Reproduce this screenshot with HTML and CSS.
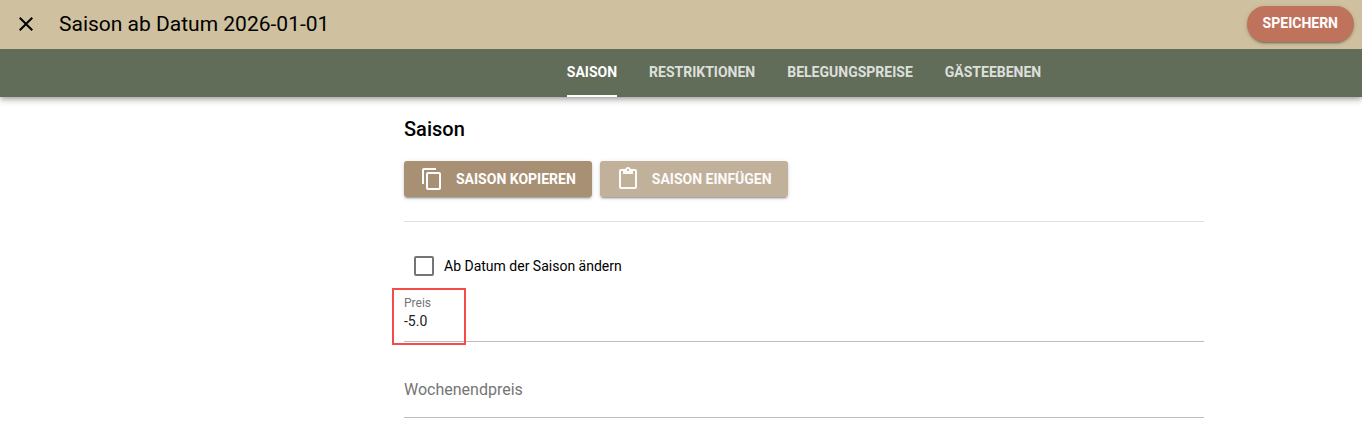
FILE: index.html
```html
<!DOCTYPE html>
<html lang="de">
<head>
  <meta charset="UTF-8">
  <meta name="viewport" content="width=device-width, initial-scale=1.0">
  <title>Saison ab Datum 2026-01-01</title>
  <link rel="stylesheet" href="styles.css">
</head>
<body>
  <header class="header">
    <div class="toolbar">
      <button type="button" class="close-button" aria-label="Schließen">
        <svg width="24" height="24" viewBox="0 0 24 24"><path d="M19 6.41L17.59 5 12 10.59 6.41 5 5 6.41 10.59 12 5 17.59 6.41 19 12 13.41 17.59 19 19 17.59 13.41 12z"/></svg>
      </button>
      <h1>Saison ab Datum 2026-01-01</h1>
      <button type="submit" form="seasonForm" class="save-button">SPEICHERN</button>
    </div>
    <nav class="tabs">
      <a href="#saison" class="tab active">SAISON</a>
      <a href="#restriktionen" class="tab">RESTRIKTIONEN</a>
      <a href="#belegungspreise" class="tab">BELEGUNGSPREISE</a>
      <a href="#gaesteebenen" class="tab">GÄSTEEBENEN</a>
    </nav>
  </header>

  <main class="content" id="saison">
    <form class="season-form" id="seasonForm">
      <h2>Saison</h2>
      <div class="actions">
        <button type="button" class="action-button">
          <svg width="24" height="24" viewBox="0 0 24 24"><path d="M16 1H4c-1.1 0-2 .9-2 2v14h2V3h12V1zm3 4H8c-1.1 0-2 .9-2 2v14c0 1.1.9 2 2 2h11c1.1 0 2-.9 2-2V7c0-1.1-.9-2-2-2zm0 16H8V7h11v14z"/></svg>
          SAISON KOPIEREN
        </button>
        <button type="button" class="action-button" disabled>
          <svg width="24" height="24" viewBox="0 0 24 24"><path d="M19 2h-4.18C14.4.84 13.3 0 12 0c-1.3 0-2.4.84-2.82 2H5c-1.1 0-2 .9-2 2v16c0 1.1.9 2 2 2h14c1.1 0 2-.9 2-2V4c0-1.1-.9-2-2-2zm-7 0c.55 0 1 .45 1 1s-.45 1-1 1-1-.45-1-1 .45-1 1-1zm7 18H5V4h2v3h10V4h2v16z"/></svg>
          SAISON EINFÜGEN
        </button>
      </div>

      <div class="check-row">
        <input type="checkbox" id="changeDate">
        <label for="changeDate">Ab Datum der Saison ändern</label>
      </div>

      <div class="field filled">
        <label for="price">Preis</label>
        <input type="text" id="price" value="-5.0">
        <div class="highlight"></div>
      </div>

      <div class="field">
        <label for="weekendPrice">Wochenendpreis</label>
        <input type="text" id="weekendPrice">
      </div>
    </form>
  </main>
</body>
</html>
```
FILE: styles.css
```css
* {
  box-sizing: border-box;
}

body {
  margin: 0;
  font-family: Roboto, sans-serif;
  font-size: 14px;
  color: #000;
  background: #fff;
}

button,
input {
  font-family: inherit;
}

/* Header */
.header {
  position: relative;
  box-shadow: 0 2px 4px -1px rgba(0, 0, 0, 0.2), 0 4px 5px rgba(0, 0, 0, 0.14), 0 1px 10px rgba(0, 0, 0, 0.12);
}

.toolbar {
  display: flex;
  align-items: center;
  height: 49px;
  padding: 0 8px 1px 14px;
  background: #cfc09f;
}

.close-button {
  display: flex;
  padding: 0;
  border: none;
  background: none;
  cursor: pointer;
}

.toolbar h1 {
  flex: 1;
  margin: 0 0 0 21px;
  font-size: 21px;
  font-weight: 400;
  line-height: 24px;
}

.save-button {
  height: 36px;
  padding: 0 16px 2px;
  border: none;
  border-radius: 18px;
  background: #c0735c;
  color: #fff;
  font-size: 14px;
  font-weight: 700;
  box-shadow: 0 3px 1px -2px rgba(0, 0, 0, 0.2), 0 2px 2px rgba(0, 0, 0, 0.14), 0 1px 5px rgba(0, 0, 0, 0.12);
  cursor: pointer;
}

/* Tabs */
.tabs {
  display: flex;
  justify-content: center;
  gap: 32px;
  height: 48px;
  padding-left: 246px;
  background: #616d58;
}

.tab {
  border-bottom: 2px solid transparent;
  color: rgba(255, 255, 255, 0.8);
  font-weight: 700;
  line-height: 46px;
  text-decoration: none;
}

.tab.active {
  border-color: #fff;
  color: #fff;
}

/* Content */
.content {
  padding-left: 246px;
}

.season-form {
  max-width: 800px;
  margin: 0 auto;
  padding-top: 20px;
}

.season-form h2 {
  margin: 0 0 20px;
  font-size: 20px;
  font-weight: 500;
  line-height: 24px;
}

.actions {
  display: flex;
  gap: 8px;
  padding-bottom: 24px;
  border-bottom: 1px solid #dfdfdf;
}

.action-button {
  display: flex;
  align-items: center;
  gap: 12px;
  height: 36px;
  padding: 0 16px 1px;
  border: none;
  border-radius: 3px;
  background: #a89074;
  color: #fff;
  font-size: 14px;
  font-weight: 700;
  box-shadow: 0 3px 1px -2px rgba(0, 0, 0, 0.2), 0 2px 2px rgba(0, 0, 0, 0.14), 0 1px 5px rgba(0, 0, 0, 0.12);
  cursor: pointer;
}

.action-button svg {
  fill: currentColor;
}

.action-button:disabled {
  background: #c1b19b;
  color: #fcfbfa;
  cursor: default;
}

/* Checkbox */
.check-row {
  display: flex;
  align-items: center;
  gap: 10px;
  margin-top: 34px;
  padding-left: 10px;
}

.check-row input {
  appearance: none;
  width: 20px;
  height: 20px;
  margin: 0;
  border: 2px solid #757575;
  border-radius: 2px;
}

.check-row input:checked {
  background: #757575;
}

/* Text fields */
.field {
  position: relative;
  height: 76px;
  padding-top: 36px;
  border-bottom: 1px solid #bdbdbd;
}

/* the label lies over the empty input */
.field label {
  position: absolute;
  color: #757575;
  font-size: 16px;
  line-height: 24px;
  pointer-events: none;
}

.field input {
  display: block;
  width: 100%;
  height: 24px;
  padding: 0;
  border: none;
  outline: none;
  background: none;
  color: #212121;
  font-size: 14px;
}

.field.filled {
  height: 66px;
  padding-top: 19px;
}

.field.filled label {
  position: static;
  display: block;
  font-size: 12px;
  line-height: 16px;
}

.field.filled input {
  height: 20px;
}

.highlight {
  position: absolute;
  left: -12px;
  bottom: -4px;
  width: 74px;
  height: 57px;
  border: 2px solid #f44b4b;
  pointer-events: none;
}
```
